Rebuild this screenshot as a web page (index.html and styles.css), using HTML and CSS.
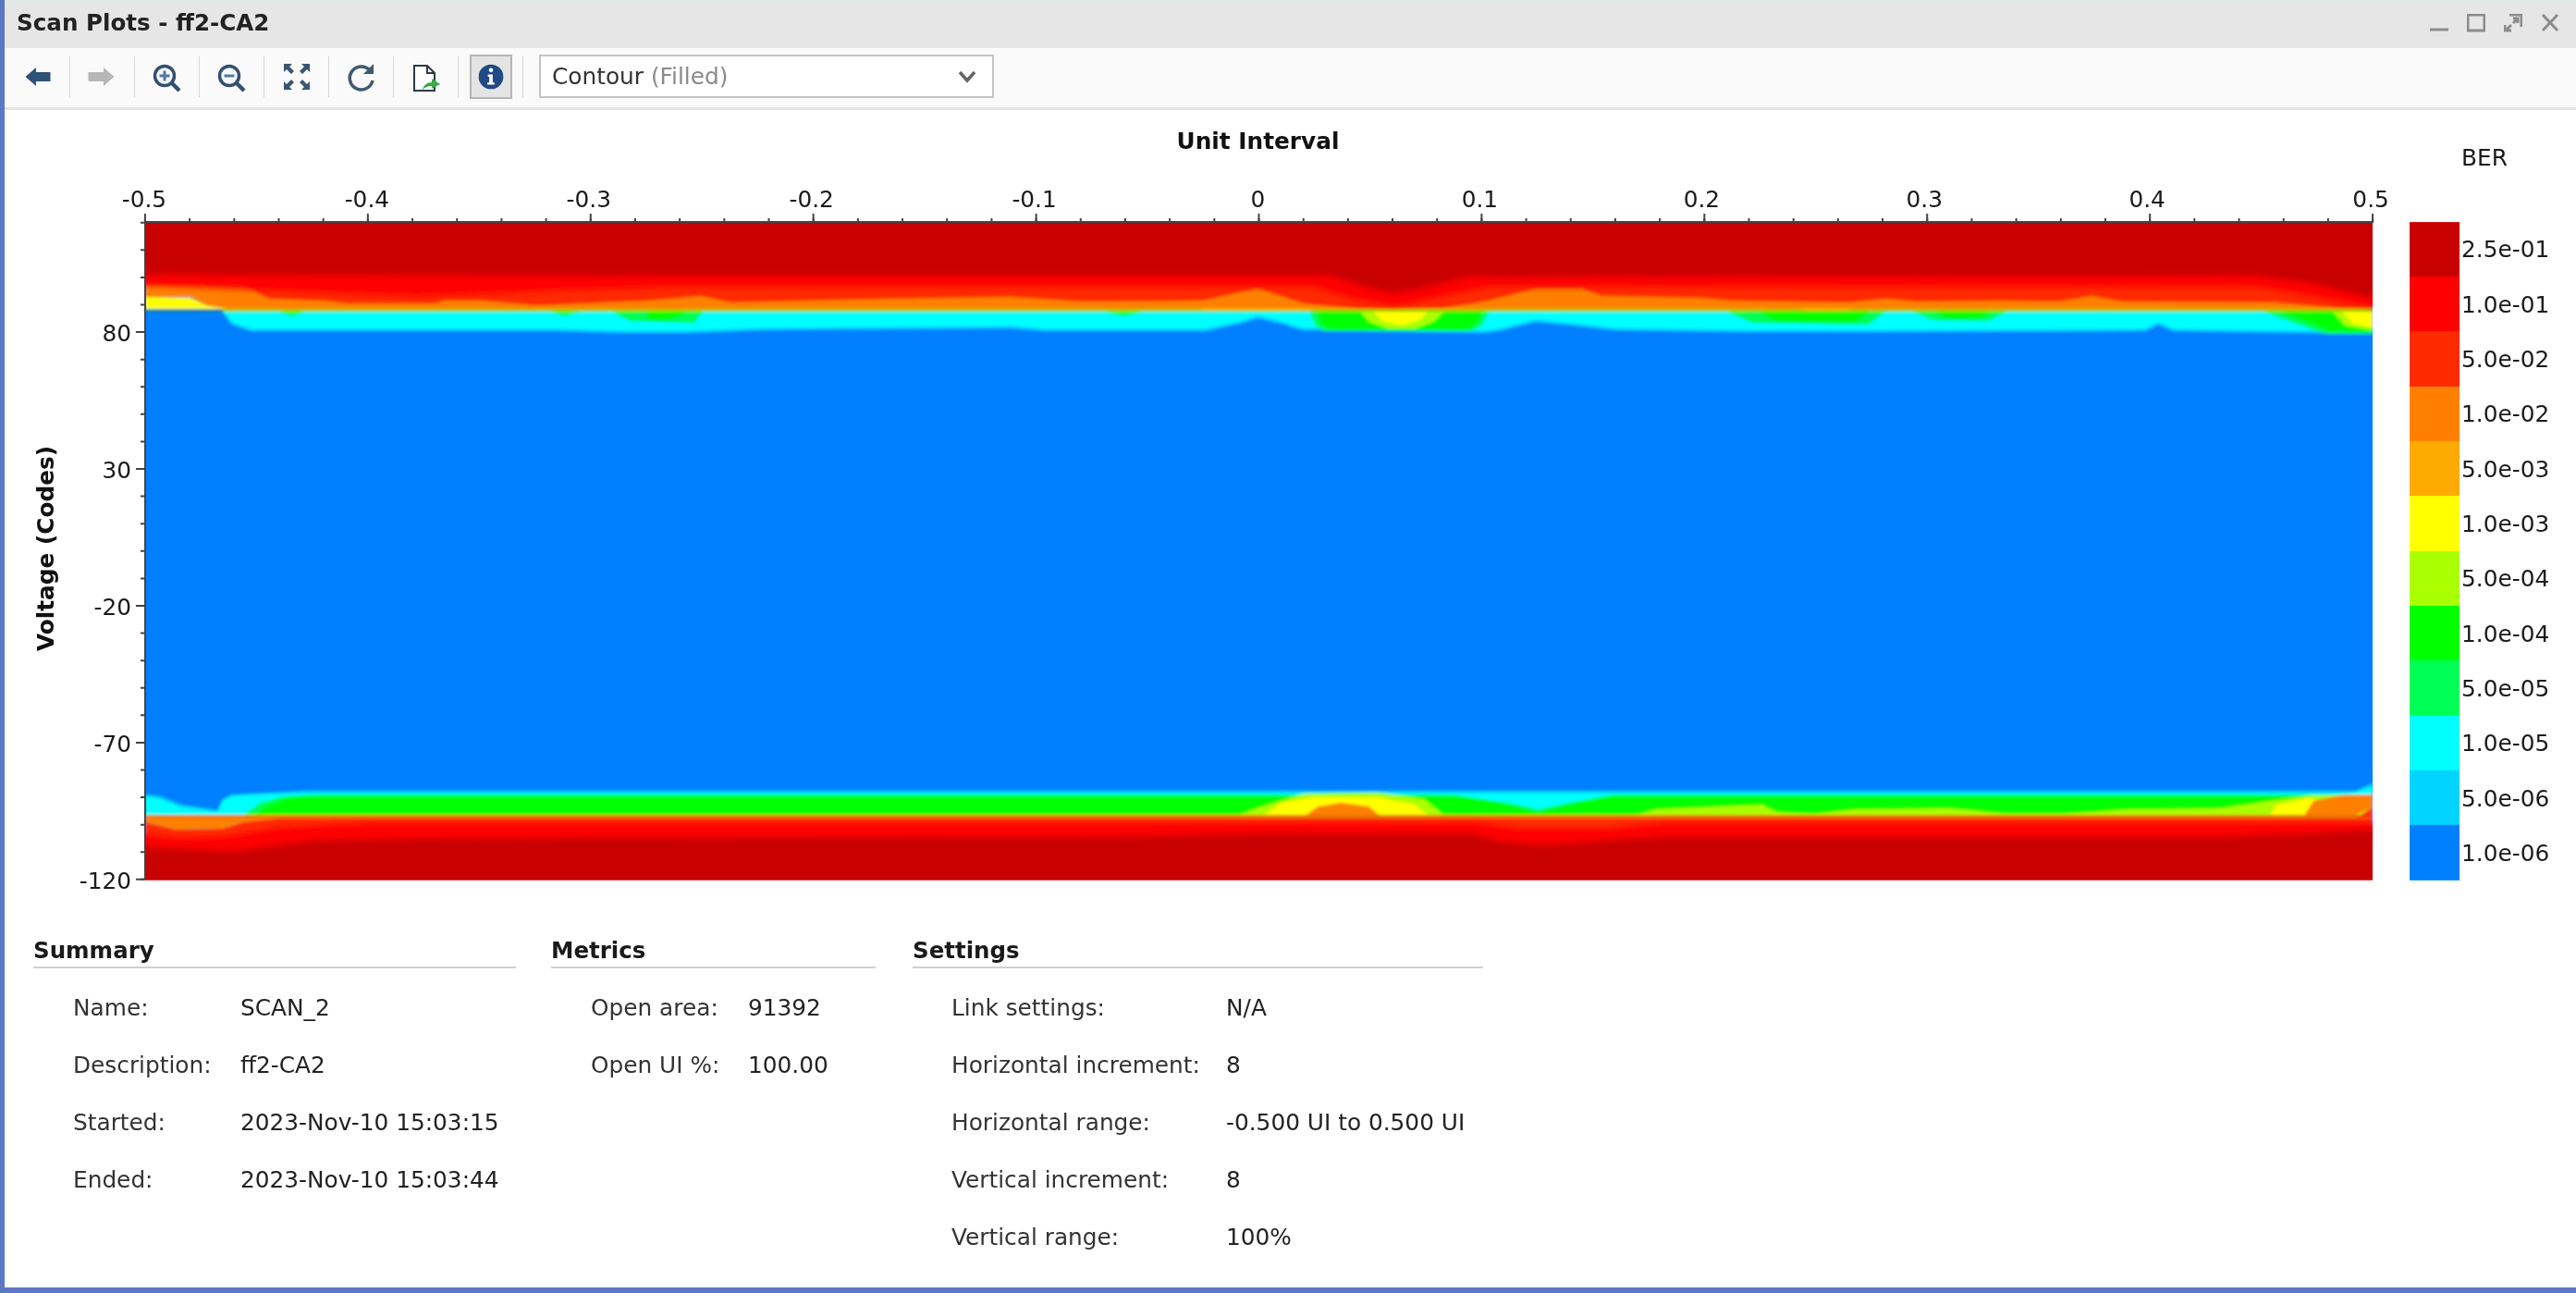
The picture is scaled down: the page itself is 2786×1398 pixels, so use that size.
FILE: index.html
```html
<!DOCTYPE html>
<html lang="en">
<head>
   <meta charset="utf-8">
   <title>Scan Plots - ff2-CA2</title>
   <link rel="stylesheet" href="styles.css">
</head>
<body>
   <div id="window">
      <div id="titlebar">
         <span class="title">Scan Plots - ff2-CA2</span>
         <div class="win-controls">
            <svg class="win-icon" viewBox="0 0 20 20"><path d="M0 17h20" /></svg>
            <svg class="win-icon" viewBox="0 0 20 20"><path d="M1 1h18v17H1z" /></svg>
            <svg class="win-icon" viewBox="0 0 20 20"><path d="M6 1h13v13M1 12v6h7M2 18l6-6M14 6l-4 4M10 5h5v5" /></svg>
            <svg class="win-icon" viewBox="0 0 20 20"><path d="M2 1l16 17M18 1L2 18" /></svg>
         </div>
      </div>

      <div id="toolbar">
         <div class="tool">
            <svg class="tool-icon" viewBox="0 0 44 44"><path fill="#2f5079" d="M8.500 22L20 12v5h15.500v10H20v5z" /></svg>
         </div>
         <div class="sep"></div>
         <div class="tool">
            <svg class="tool-icon" viewBox="0 0 44 44"><path fill="#b7b7b7" d="M34.500 22L23 12v5H6.500v10H23v5z" /></svg>
         </div>
         <div class="sep"></div>
         <div class="tool">
            <svg class="tool-icon" viewBox="0 0 44 44">
               <circle cx="19" cy="21" r="10.500" fill="#f4f8fc" stroke="#35506f" stroke-width="3.500" />
               <path d="M27 29l8 8" stroke="#35506f" stroke-width="4.500" />
               <path d="M13.500 21h11M19 15.500v11" stroke="#5878a0" stroke-width="3" />
            </svg>
         </div>
         <div class="sep"></div>
         <div class="tool">
            <svg class="tool-icon" viewBox="0 0 44 44">
               <circle cx="19" cy="21" r="10.500" fill="#f4f8fc" stroke="#35506f" stroke-width="3.500" />
               <path d="M27 29l8 8" stroke="#35506f" stroke-width="4.500" />
               <path d="M13.500 21h11" stroke="#5878a0" stroke-width="3" />
            </svg>
         </div>
         <div class="sep"></div>
         <div class="tool">
            <svg class="tool-icon" viewBox="0 0 44 44" fill="#3a5572">
               <path d="M8 8h9l-3 3 5 5-3 3-5-5-3 3z" />
               <path d="M36 8v9l-3-3-5 5-3-3 5-5-3-3z" />
               <path d="M8 36v-9l3 3 5-5 3 3-5 5 3 3z" />
               <path d="M36 36h-9l3-3-5-5 3-3 5 5 3-3z" />
            </svg>
         </div>
         <div class="sep"></div>
         <div class="tool">
            <svg class="tool-icon" viewBox="0 0 44 44">
               <path d="M31 15A12.500 12.500 0 1 0 34 26" fill="none" stroke="#3f5a74" stroke-width="3.500" />
               <path d="M35 8v11H24z" fill="#3f5a74" />
            </svg>
         </div>
         <div class="sep"></div>
         <div class="tool">
            <svg class="tool-icon" viewBox="0 0 44 44">
               <path d="M9 10h14l8 8v19H9z" fill="#fff" stroke="#2e3a46" stroke-width="2" />
               <path d="M23 10v8h8" fill="none" stroke="#2e3a46" stroke-width="2" />
               <path d="M18 36c1-5 5-8 10-8v-4l9 6-9 5v-3c-4 0-7 1-10 4z" fill="#3ba84a" />
            </svg>
         </div>
         <div class="sep"></div>
         <div class="tool">
            <div class="toggled">
               <svg class="tool-icon" viewBox="0 0 44 44">
                  <circle cx="22" cy="22" r="14" fill="#1f4a84" />
                  <circle cx="22" cy="14.500" r="2.400" fill="#fff" />
                  <path d="M18.500 19.500H24v9h2v2.500h-8v-2.500h2v-6.500h-1.500z" fill="#fff" />
               </svg>
            </div>
         </div>
         <div class="sep"></div>
         <div class="plot-select">
            <span>Contour <span class="muted">(Filled)</span></span>
            <svg class="chevron" viewBox="0 0 20 14"><path d="M2 2l8 9 8-9" /></svg>
         </div>
      </div>

      <div id="chart">
         <svg class="chart-svg" viewBox="4 119 2782 881">
            <defs>
               <clipPath id="plot-clip"><rect x="156" y="240" width="2410" height="712" /></clipPath>
               <filter id="soft" x="100" y="200" width="2520" height="800" filterUnits="userSpaceOnUse">
                  <feGaussianBlur stdDeviation="1.400" />
               </filter>
               <filter id="softer" x="100" y="200" width="2520" height="800" filterUnits="userSpaceOnUse">
                  <feGaussianBlur stdDeviation="3" />
               </filter>
               <path id="top-edge" d="M238 336L250 351 270 358 600 358 670 360 745 360 823 357 1093 355 1130 358 1303 358 1340 350 1360 344 1385 350 1408 357 1605 360 1620 358 1661 348 1700 352 1745 357 1880 359 2000 359 2320 358 2334 351 2350 358 2480 360 2566 361V330H238z" />
            </defs>

            <text class="axis-title" x="1360" y="161" text-anchor="middle">Unit Interval</text>
            <text class="axis-title" transform="translate(57 593) rotate(-90)" text-anchor="middle">Voltage (Codes)</text>

            <g class="tick-label" text-anchor="middle">
               <text x="155" y="224">-0.5</text>
               <text x="396" y="224">-0.4</text>
               <text x="636" y="224">-0.3</text>
               <text x="877" y="224">-0.2</text>
               <text x="1118" y="224">-0.1</text>
               <text x="1360" y="224">0</text>
               <text x="1600" y="224">0.1</text>
               <text x="1840" y="224">0.2</text>
               <text x="2081" y="224">0.3</text>
               <text x="2322" y="224">0.4</text>
               <text x="2564" y="224">0.5</text>
            </g>
            <g class="tick-label" text-anchor="end">
               <text x="141" y="369">80</text>
               <text x="141" y="517">30</text>
               <text x="141" y="665">-20</text>
               <text x="141" y="813">-70</text>
               <text x="141" y="961">-120</text>
            </g>

            <g clip-path="url(#plot-clip)">
               <g filter="url(#soft)">
                  <rect x="100" y="200" width="2520" height="800" fill="#0080ff" />

                  <!-- top edge, painted from the eye outwards -->
                  <use href="#top-edge" fill="#00d4ff" />
                  <use href="#top-edge" fill="#00ffff" transform="translate(0 -3)" />
                  <g fill="#00ff55">
                     <path d="M660 336L680 347 750 349 760 336z" />
                     <path d="M298 336L315 342 332 336z" />
                     <path d="M592 336L610 342 630 336z" />
                     <path d="M1190 336L1215 342 1240 336z" />
                     <path d="M1416 336L1422 352 1432 358 1590 358 1602 352 1610 336z" />
                     <path d="M1865 336L1895 349 2020 351 2040 336z" />
                     <path d="M2066 336L2090 346 2150 347 2172 336z" />
                     <path d="M2445 336L2490 352 2515 361 2566 361V336z" />
                  </g>
                  <g fill="#00ff00">
                     <path d="M700 336V346L725 345 745 336z" />
                     <path d="M1424 336L1428 350 1440 356 1585 356 1597 350 1603 336z" />
                     <path d="M1900 336L1920 347 2005 348 2025 336z" />
                     <path d="M2090 336L2105 344 2140 344 2155 336z" />
                     <path d="M2462 336L2500 350 2520 358 2566 358V336z" />
                  </g>
                  <path fill="#aaff00" d="M1470 336L1480 348 1500 355 1530 355 1550 348 1562 336z" />
                  <path fill="#ffff00" d="M1484 336L1494 347 1515 352 1535 346 1545 336z" />
                  <path fill="#aaff00" d="M2522 336L2536 352 2566 357V336z" />
                  <path fill="#ffff00" d="M2532 336L2545 350 2566 354V336z" />

                  <rect x="238" y="334" width="2328" height="3" fill="#a4c800" />
                  <rect x="156" y="335" width="85" height="2" fill="#0a8a20" />
                  <path fill="#ffff00" d="M156 240V334H246L222 330 205 322 156 321z" />
                  <path fill="#ff8000" d="M156 240V321H205L222 330 246 334H2566V240z" />
                  <path fill="#ffaa00" d="M1300 333H1420V335H1300zM1950 333H2000V335H1950z" />
                  <path fill="#ff2a00" d="M156 240V309L263 309 290 323 350 325 375 328 470 328 480 325 520 325 580 330 700 325 757 320 790 327 960 323 1093 321 1170 326 1300 325 1360 312 1409 328 1472 334 1560 333 1605 326 1661 312 1710 312 1732 320 1838 322 1873 325 1998 327 2039 323 2074 326 2164 325 2226 326 2261 320 2295 326 2462 327 2531 333 2566 333V240z" />
                  <path fill="#ff0000" filter="url(#softer)" d="M100 200V308H156L300 314 450 320 600 314 720 310 1420 310 1460 322 1507 331 1550 322 1610 310 2440 310 2500 320 2566 332H2620V200z" />
                  <path fill="#c80000" filter="url(#softer)" d="M100 200V297H156L700 298 1440 298 1480 311 1507 317 1540 311 1585 299 2440 298 2500 306 2566 322H2620V200z" />

                  <!-- bottom edge -->
                  <path fill="#00d4ff" d="M156 859L172 861 195 870 234 876 240 864 250 859 290 857 330 855 2548 855 2566 847V900H156z" />
                  <path fill="#00ffff" d="M156 861L172 864 195 873 234 878 240 866 250 861 290 859 330 858 2540 858 2566 851V900H156z" />
                  <path fill="#00ff55" d="M262 882L280 868 306 861 340 859 1570 859 1632 868 1663 875 1695 868 1745 859 2566 859V882z" />
                  <path fill="#00ff00" d="M274 882L290 870 312 862 345 861 1580 861 1630 870 1663 878 1698 870 1740 861 2566 861V882z" />
                  <g fill="#aaff00">
                     <path d="M1336 882L1370 870 1410 858 1490 857 1540 864 1562 882z" />
                     <path d="M1767 882L1790 875 1905 870 1922 878 1960 880 2007 875 2110 874 2172 880 2230 880 2303 875 2400 874 2454 866 2500 860 2566 859V882z" />
                  </g>
                  <path fill="#ffff00" d="M1365 882L1385 868 1420 862 1490 862 1530 870 1545 882z" />
                  <path fill="#ffff00" d="M2454 882L2462 870 2500 862 2520 882z" />
                  <path fill="#ff8000" d="M1411 882L1425 872 1450 868 1480 872 1492 882z" />
                  <path fill="#ff8000" d="M2492 882L2502 866 2530 860 2566 859V873L2550 880 2545 884z" />
                  <path fill="#e87400" d="M156 881H2566V885H156z" />
                  <path fill="#ff8000" d="M156 884V889L190 897 240 896 262 889 300 886 300 884z" />
                  <path fill="#ff2a00" d="M156 889L190 897 240 896 262 889 300 885 2566 885 2566 873 2548 884 2566 884V960H156z" />
                  <path fill="#ff0000" filter="url(#softer)" d="M100 902H156L190 906 240 905 300 895 400 890 1600 890 1640 896 1740 896 1800 890 2620 890V1000H100z" />
                  <path fill="#c80000" filter="url(#softer)" d="M100 916H156L250 921 340 909 500 906 1200 905 1380 901 1590 901 1620 910 1670 914 1750 908 1800 905 2400 905 2500 901 2566 897H2620V1000H100z" />
               </g>
            </g>

            <g class="axis-line">
               <path d="M155 240H2567M156 239V952" />
            </g>
            <g class="ticks">
               <path stroke-width="4" stroke-dasharray="2 46.200" d="M155 238H2568" />
               <path stroke-width="9" stroke-dasharray="2 239" d="M155 235.500H2568" />
               <path stroke-width="4" stroke-dasharray="2 27.600" d="M153 952V238" />
               <path stroke-width="9" stroke-dasharray="2 146" d="M150.500 952V340" />
            </g>

            <text class="tick-label" x="2662" y="179">BER</text>
            <g class="legend-bands">
               <rect x="2606" y="240" width="54" height="60" fill="#c80000" />
               <rect x="2606" y="299" width="54" height="60" fill="#ff0000" />
               <rect x="2606" y="358" width="54" height="60" fill="#ff2a00" />
               <rect x="2606" y="418" width="54" height="60" fill="#ff8000" />
               <rect x="2606" y="477" width="54" height="60" fill="#ffaa00" />
               <rect x="2606" y="536" width="54" height="60" fill="#ffff00" />
               <rect x="2606" y="596" width="54" height="60" fill="#aaff00" />
               <rect x="2606" y="655" width="54" height="60" fill="#00ff00" />
               <rect x="2606" y="714" width="54" height="60" fill="#00ff55" />
               <rect x="2606" y="774" width="54" height="60" fill="#00ffff" />
               <rect x="2606" y="833" width="54" height="60" fill="#00d4ff" />
               <rect x="2606" y="892" width="54" height="60" fill="#0080ff" />
            </g>
            <g class="tick-label">
               <text x="2662" y="278">2.5e-01</text>
               <text x="2662" y="338">1.0e-01</text>
               <text x="2662" y="397">5.0e-02</text>
               <text x="2662" y="456">1.0e-02</text>
               <text x="2662" y="516">5.0e-03</text>
               <text x="2662" y="575">1.0e-03</text>
               <text x="2662" y="634">5.0e-04</text>
               <text x="2662" y="694">1.0e-04</text>
               <text x="2662" y="753">5.0e-05</text>
               <text x="2662" y="812">1.0e-05</text>
               <text x="2662" y="872">5.0e-06</text>
               <text x="2662" y="931">1.0e-06</text>
            </g>
         </svg>
      </div>

      <div id="details">
         <section class="panel panel-summary">
            <h2>Summary</h2>
            <dl>
               <dt>Name:</dt><dd>SCAN_2</dd>
               <dt>Description:</dt><dd>ff2-CA2</dd>
               <dt>Started:</dt><dd>2023-Nov-10 15:03:15</dd>
               <dt>Ended:</dt><dd>2023-Nov-10 15:03:44</dd>
            </dl>
         </section>
         <section class="panel panel-metrics">
            <h2>Metrics</h2>
            <dl>
               <dt>Open area:</dt><dd>91392</dd>
               <dt>Open UI %:</dt><dd>100.00</dd>
            </dl>
         </section>
         <section class="panel panel-settings">
            <h2>Settings</h2>
            <dl>
               <dt>Link settings:</dt><dd>N/A</dd>
               <dt>Horizontal increment:</dt><dd>8</dd>
               <dt>Horizontal range:</dt><dd>-0.500 UI to 0.500 UI</dd>
               <dt>Vertical increment:</dt><dd>8</dd>
               <dt>Vertical range:</dt><dd>100%</dd>
            </dl>
         </section>
      </div>
   </div>
</body>
</html>
```
FILE: styles.css
```css
* {
    margin: 0;
    padding: 0;
    box-sizing: border-box;
    font-family: "DejaVu Sans", sans-serif;
}
body {
    background: #fff;
    width: 2786px;
    height: 1398px;
    overflow: hidden;
}
#window {
    height: 1398px;
    border-left: 5px solid #5c78c4;
    border-bottom: 6px solid #5c78c4;
    background: #fff;
    color: #1a1a1a;
    filter: blur(0.5px);
}
#titlebar {
    height: 52px;
    background: #e6e6e6;
    border-top: 3px solid #e2eae8;
    display: flex;
    align-items: center;
    justify-content: space-between;
    padding: 0 18px 6px 13px;
}
.title {
    font-size: 24.600px;
    font-weight: bold;
    color: #222;
}
.win-controls {
    display: flex;
    gap: 20px;
}
.win-icon {
    width: 20px;
    height: 20px;
    fill: none;
    stroke: #8c8c8c;
    stroke-width: 3;
}
#toolbar {
    height: 67px;
    background: #fafafa;
    border-bottom: 3px solid #e3e3e3;
    display: flex;
    align-items: center;
    padding: 0 0 3px 1px;
}
.tool {
    width: 69px;
    height: 48px;
    display: flex;
    align-items: center;
    justify-content: center;
}
.tool-icon {
    width: 44px;
    height: 44px;
    display: block;
}
.toggled {
    width: 46px;
    height: 48px;
    background: #e4e4e4;
    border: 2px solid #b5b5b5;
    display: flex;
    align-items: center;
    justify-content: center;
}
.sep {
    width: 1px;
    height: 44px;
    background: #d8d8d8;
}
.plot-select {
    width: 492px;
    height: 47px;
    margin-left: 17px;
    background: #fff;
    border: 2px solid #c4c4c4;
    display: flex;
    align-items: center;
    justify-content: space-between;
    padding: 0 17px 0 12px;
    font-size: 24.800px;
    color: #333;
}
.muted {
    color: #8a8a8a;
}
.chevron {
    width: 20px;
    height: 14px;
    fill: none;
    stroke: #666;
    stroke-width: 3.500;
}
#chart {
    height: 881px;
}
.chart-svg {
    display: block;
    width: 2781px;
    height: 881px;
}
.axis-title {
    font-size: 24.800px;
    font-weight: bold;
    fill: #111;
}
.tick-label {
    font-size: 24.800px;
    fill: #1a1a1a;
}
.axis-line {
    fill: none;
    stroke: #444;
    stroke-width: 2;
}
.ticks {
    fill: none;
    stroke: #444;
}
#details {
    display: flex;
    padding-left: 31px;
}
.panel-summary {
    width: 522px;
    margin-right: 38px;
}
.panel-metrics {
    width: 351px;
    margin-right: 40px;
}
.panel-settings {
    width: 617px;
}
.panel h2 {
    height: 47px;
    border-bottom: 2px solid #cfcfcf;
    font-size: 24.500px;
    font-weight: bold;
    line-height: 55px;
    color: #1a1a1a;
}
.panel dl {
    display: grid;
    grid-auto-rows: 62px;
    align-items: center;
    padding: 11px 0 0 43px;
    font-size: 24.800px;
}
.panel-summary dl {
    grid-template-columns: 181px 1fr;
}
.panel-metrics dl {
    grid-template-columns: 170px 1fr;
}
.panel-settings dl {
    grid-template-columns: 297px 1fr;
    padding-left: 42px;
}
.panel dt {
    color: #333;
}
.panel dd {
    color: #222;
}
```
